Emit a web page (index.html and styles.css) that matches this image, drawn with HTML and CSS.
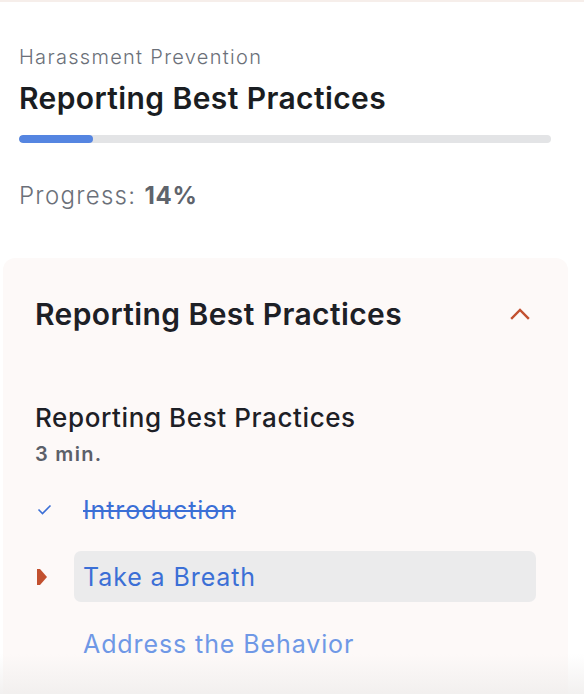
FILE: index.html
```html
<!DOCTYPE html>
<html>
<head>
<meta charset="utf-8">
<link rel="stylesheet" href="styles.css">
</head>
<body>
<div class="topline"></div>
<header class="course">
  <div class="eyebrow">Harassment Prevention</div>
  <h1 class="course-title">Reporting Best Practices</h1>
  <div class="bar"><div class="bar-fill" style="width:14%"></div></div>
  <div class="progress">Progress: <b>14%</b></div>
</header>
<section class="card">
  <div class="card-head">
    <h2 class="card-title">Reporting Best Practices</h2>
    <svg class="chev" width="20" height="12" viewBox="0 0 20 12"><path d="M2 10 L10 2 L18 10" fill="none" stroke="#c2502f" stroke-width="2.4" stroke-linecap="square"/></svg>
  </div>
  <div class="lesson">
    <h3 class="lesson-title">Reporting Best Practices</h3>
    <div class="lesson-time">3 min.</div>
  </div>
  <ul class="steps">
    <li class="step done">
      <span class="mark"><svg width="15" height="11" viewBox="0 0 15 11"><path d="M1.5 5.5 L5.5 9.5 L13.5 1.5" fill="none" stroke="#3b6fd6" stroke-width="1.6"/></svg></span>
      <span class="label">Introduction</span>
    </li>
    <li class="step current">
      <span class="mark"><svg width="10" height="16" viewBox="0 0 10 16"><path d="M0 0 H3 L10 8 L3 16 H0 Z" fill="#c2502f"/></svg></span>
      <span class="label">Take a Breath</span>
    </li>
    <li class="step next">
      <span class="mark"></span>
      <span class="label">Address the Behavior</span>
    </li>
  </ul>
</section>
<div class="fade"></div>
</body>
</html>
```
FILE: styles.css
```css
html, body {
  margin: 0;
  padding: 0;
  background: #ffffff;
  font-family: Inter, "Open Sans", sans-serif;
  overflow: hidden;
}
body {
  height: 694px;
  position: relative;
}
.topline {
  height: 2px;
  background: #f6eeea;
}
.course {
  padding: 42px 33px 0 19px;
}
.eyebrow {
  font-size: 20px;
  color: #6b7079;
  line-height: 26px;
  font-weight: 300;
  letter-spacing: 1.3px;
}
.course-title {
  margin: 10px 0 0;
  font-size: 30px;
  line-height: 36px;
  font-weight: 600;
  letter-spacing: 0.4px;
  color: #1a1d22;
}
.bar {
  margin-top: 19px;
  height: 8px;
  border-radius: 4px;
  background: #e3e4e6;
  overflow: hidden;
}
.bar-fill {
  height: 100%;
  border-radius: 4px;
  background: #5585e1;
}
.progress {
  margin-top: 38px;
  font-size: 24px;
  line-height: 30px;
  font-weight: 300;
  letter-spacing: 1.3px;
  color: #6b7079;
}
.progress b {
  font-weight: 700;
  letter-spacing: 0.8px;
  color: #5f646c;
}
.card {
  margin: 47px 16px 0 3px;
  background: #fdf9f8;
  border-radius: 12px;
  padding: 35px 32px 40px 32px;
  height: 500px;
}
.card-head {
  display: flex;
  align-items: center;
  justify-content: space-between;
}
.card-title {
  margin: 0;
  font-size: 30px;
  line-height: 42px;
  font-weight: 600;
  letter-spacing: 0.4px;
  color: #1d2026;
}
.chev {
  margin-right: 6px;
}
.lesson {
  margin-top: 67px;
}
.lesson-title {
  margin: 0;
  font-size: 26px;
  line-height: 32px;
  font-weight: 500;
  letter-spacing: 0.6px;
  color: #1d2026;
}
.lesson-time {
  margin-top: 8px;
  font-size: 20px;
  line-height: 24px;
  font-weight: 600;
  letter-spacing: 1.3px;
  color: #5b6069;
}
.steps {
  list-style: none;
  margin: 18px 0 0;
  padding: 0;
  display: flex;
  flex-direction: column;
  gap: 16px;
}
.step {
  display: flex;
  align-items: center;
}
.mark {
  width: 39px;
  display: flex;
  align-items: center;
  padding-left: 2px;
  box-sizing: border-box;
}
.label {
  flex: 1;
  padding: 0 9px;
  height: 51px;
  display: flex;
  align-items: center;
  font-size: 25px;
  letter-spacing: 0.9px;
  border-radius: 7px;
  color: #3b6fd6;
}
.done .label {
  text-decoration: line-through;
  text-decoration-thickness: 2px;
}
.current .label {
  background: #ebebec;
}
.next .label {
  color: #6f98e6;
}
.fade {
  position: absolute;
  left: 0;
  right: 0;
  bottom: 0;
  height: 40px;
  background: linear-gradient(to bottom, rgba(240,238,237,0), rgba(240,238,237,0.85));
}
```
